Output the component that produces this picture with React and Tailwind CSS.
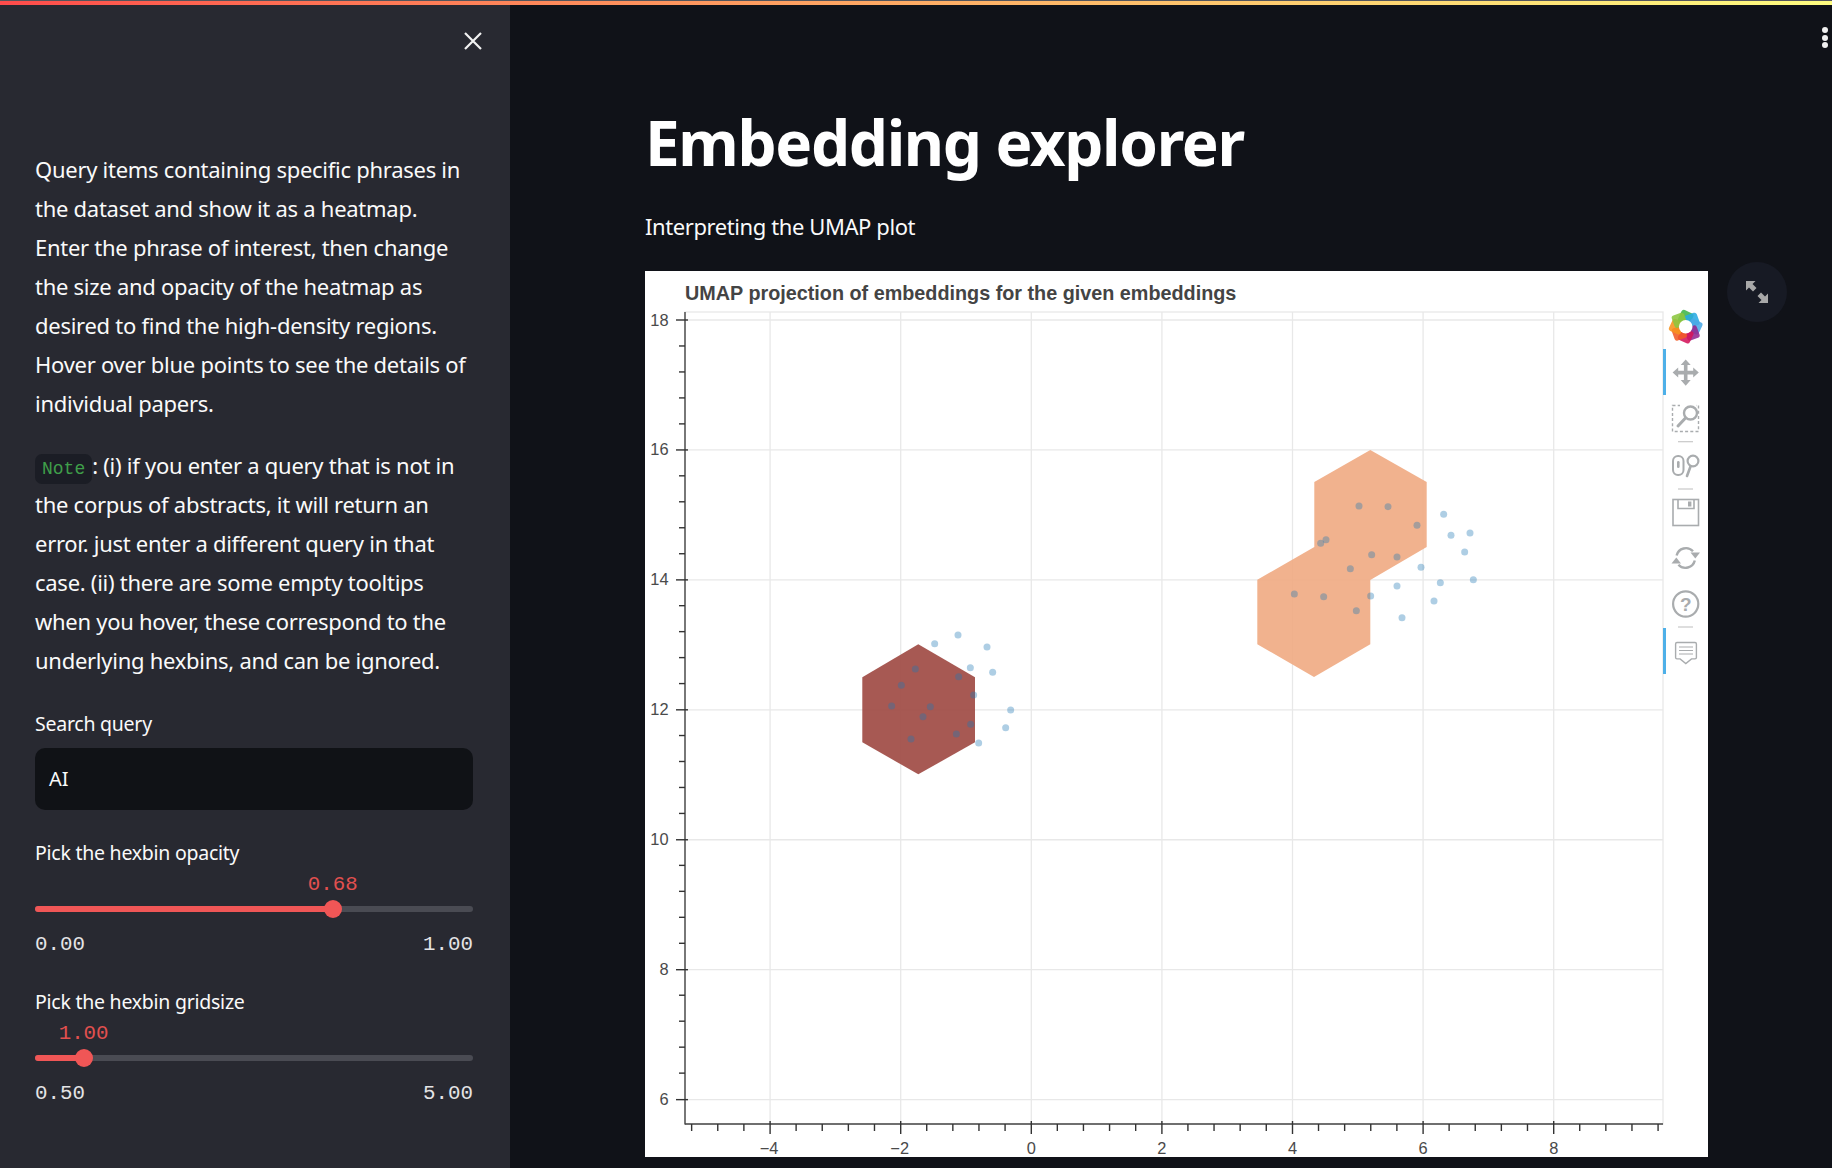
import React from "react";

const W = 1063, H = 886, OX = 645, OY = 271;
const xPos = (v) => 1031.3 + v * 65.3;
const yPos = (v) => 320 + (18 - v) * 64.97;

const darkPts = [[344,131],[414,105],[501,141],[451,203],[518,217],[286,207],[416,230],[244,256],[461,285],[215,318],[331,320],[572,330],[309,350],[452,373],[557,383],[409,402],[273,417],[476,429]].map(([x,y]) => [820 + x/3, 600 + y/3]);
const orangePts = [[387,228],[474,230],[561,286],[641,253],[720,309],[663,316],[288,329],[272,340],[704,366],[425,374],[501,381],[361,416],[573,412],[631,458],[730,449],[501,468],[193,492],[281,500],[422,498],[612,513],[379,542],[516,563]].map(([x,y]) => [1230 + x/3, 430 + y/3]);

const majorX = [-4,-2,0,2,4,6,8];
const majorY = [18,16,14,12,10,8,6];
const minorX = Array.from({length: 38}, (_, i) => 770 + (i-3) * 26.12).filter((_, i) => (i-3) % 5 !== 0);
const minorY = Array.from({length: 31}, (_, i) => 320 + i * 25.97).filter((_, i) => i % 5 !== 0);

const petals = ["#3fb54a","#29abe2","#4aa8e6","#93278f","#d4145a","#f15a24","#f7931e","#8cc63f"];

function BokehPlot() {
  const gray = "#a9acae";
  const axis = "#444444";
  const tick = { fontFamily: "'Liberation Sans', sans-serif", fontSize: 16.4, fill: "#4a4a4a" };
  return (
    <svg width={W} height={H} viewBox={`${OX} ${OY} ${W} ${H}`} className="block bg-white">
      <rect x="685" y="312" width="978" height="812" fill="none" stroke="#e8e8e8" strokeWidth="1.3" />
      {majorX.map((v) => <line key={v} x1={xPos(v)} x2={xPos(v)} y1="312" y2="1124" stroke="#e8e8e8" strokeWidth="1.3" />)}
      {majorY.map((v) => <line key={v} x1="685" x2="1663" y1={yPos(v)} y2={yPos(v)} stroke="#e8e8e8" strokeWidth="1.3" />)}

      <g fill="#a04b44" fillOpacity="0.92">
        <polygon points="918.3,644.3 975,677.3 975,742.3 918.3,774.3 862.3,742.3 862.3,677.3" />
      </g>
      <g fill="#efaa82" fillOpacity="0.9">
        <polygon points="1370.3,450 1426.7,482 1426.7,547 1370.3,580 1370.3,644.3 1314,677 1257.3,644.3 1257.3,579.7 1314.3,547 1314.3,482" />
      </g>
      <g fill="#1f77b4" fillOpacity="0.36">
        {[...darkPts, ...orangePts].map(([x, y], i) => <circle key={i} cx={x} cy={y} r="3.5" />)}
      </g>

      <text x="685" y="300" fontFamily="'Liberation Sans', sans-serif" fontWeight="700" fontSize="19.8" fill="#444444">UMAP projection of embeddings for the given embeddings</text>

      <line x1="685" x2="685" y1="312" y2="1124.6" stroke={axis} strokeWidth="1.4" />
      <line x1="685" x2="1663" y1="1124" y2="1124" stroke={axis} strokeWidth="1.4" />
      {majorY.map((v) => <line key={v} x1="676" x2="688" y1={yPos(v)} y2={yPos(v)} stroke="#333" strokeWidth="1.4" />)}
      {minorY.map((y) => <line key={y} x1="679" x2="685" y1={y} y2={y} stroke="#333" strokeWidth="1.4" />)}
      {majorX.map((v) => <line key={v} x1={xPos(v)} x2={xPos(v)} y1="1121" y2="1134" stroke="#333" strokeWidth="1.4" />)}
      {minorX.map((x) => <line key={x} x1={x} x2={x} y1="1124" y2="1131" stroke="#333" strokeWidth="1.4" />)}
      {majorY.map((v) => <text key={v} x="668.5" y={yPos(v) + 5.5} textAnchor="end" {...tick}>{v}</text>)}
      {majorX.map((v) => <text key={v} x={xPos(v) + (v < 0 ? -1 : 0)} y="1154" textAnchor="middle" {...tick}>{v < 0 ? `−${-v}` : v}</text>)}

      <rect x="1663" y="349" width="3" height="46" fill="#4eb0e8" />
      <rect x="1663" y="628" width="3" height="46" fill="#4eb0e8" />

      {/* Bokeh logo */}
      <g transform="translate(1685.7 326.7)">
        {petals.map((c, i) => (
          <rect key={i} x="-6.5" y="-15.5" width="13" height="13" rx="2.5" fill={c} fillOpacity="0.88" transform={`rotate(${i * 45} 0 0) rotate(25 0 -9)`} />
        ))}
        <circle r="6.8" fill="#fff" />
      </g>

      {/* Pan */}
      <path fill={gray} d="M1685.7 359.5l5 5.6h-3.2v5.7h5.7v-3.2l5.6 5-5.6 5v-3.2h-5.7v5.7h3.2l-5 5.6-5-5.6h3.2v-5.7h-5.7v3.2l-5.6-5 5.6-5v3.2h5.7v-5.7h-3.2z" />

      {/* Box zoom */}
      <rect x="1672.5" y="405.5" width="26" height="26" fill="none" stroke={gray} strokeWidth="1.4" strokeDasharray="3 2.2" />
      <rect x="1680" y="403" width="16" height="20" fill="#fff" />
      <circle cx="1690.5" cy="413" r="6.5" fill="#fff" stroke={gray} strokeWidth="2.4" />
      <line x1="1685.5" y1="418" x2="1678" y2="426" stroke={gray} strokeWidth="3" strokeLinecap="round" />

      <line x1="1678" x2="1693" y1="441.7" y2="441.7" stroke="#c8c8c8" strokeWidth="1.2" />

      {/* Wheel zoom */}
      <rect x="1673" y="456" width="10.5" height="19" rx="5" fill="none" stroke={gray} strokeWidth="2" />
      <rect x="1677" y="461" width="2.6" height="7" rx="1.3" fill={gray} />
      <circle cx="1693" cy="461" r="5.4" fill="none" stroke={gray} strokeWidth="2.2" />
      <line x1="1690.5" y1="466.5" x2="1687" y2="476" stroke={gray} strokeWidth="2.6" strokeLinecap="round" />

      <line x1="1678" x2="1693" y1="489" y2="489" stroke="#c8c8c8" strokeWidth="1.2" />

      {/* Save */}
      <rect x="1673" y="499.5" width="25.5" height="26" fill="none" stroke={gray} strokeWidth="1.6" />
      <path d="M1678 500v8.5h16V500" fill="none" stroke={gray} strokeWidth="1.6" />
      <rect x="1688" y="501.5" width="3.4" height="5" fill={gray} />

      {/* Reset */}
      <path d="M1676.6 555.5a9.6 9.6 0 0 1 16.4-4.2" fill="none" stroke={gray} strokeWidth="2.4" />
      <path d="M1694.8 560.5a9.6 9.6 0 0 1-16.4 4.2" fill="none" stroke={gray} strokeWidth="2.4" />
      <path d="M1690.5 552.5h9.5l-4.7 6z" fill={gray} />
      <path d="M1671.5 563.5h9.5l-4.7-6z" fill={gray} />

      {/* Help */}
      <circle cx="1685.7" cy="604" r="12.6" fill="none" stroke={gray} strokeWidth="2.2" />
      <text x="1685.7" y="611" textAnchor="middle" fontFamily="'Liberation Sans', sans-serif" fontWeight="700" fontSize="19" fill={gray}>?</text>

      <line x1="1678" x2="1693" y1="627" y2="627" stroke="#c8c8c8" strokeWidth="1.2" />

      {/* Hover */}
      <path d="M1677 642.5h18a1.4 1.4 0 0 1 1.4 1.4v13.6a1.4 1.4 0 0 1-1.4 1.4h-3.5l-5.7 4.6-5.7-4.6h-3.1a1.4 1.4 0 0 1-1.4-1.4v-13.6a1.4 1.4 0 0 1 1.4-1.4z" fill="none" stroke={gray} strokeWidth="1.4" />
      <path d="M1679 647h14M1679 650.5h14M1679 654h14" stroke={gray} strokeWidth="1.2" />
    </svg>
  );
}

function Slider({ label, min, max, value, pct }) {
  return (
    <div>
      <div className="h-[28px] text-[19.5px] leading-[28px] tracking-[-0.25px]">{label}</div>
      <div className="relative mt-[39px] h-[6px] rounded-full bg-[#4a4b53]">
        <div className="h-full rounded-full bg-[#f05656]" style={{ width: `${pct}%` }} />
        <div className="absolute top-1/2 h-[18px] w-[18px] -translate-x-1/2 -translate-y-1/2 rounded-full bg-[#f05656]" style={{ left: `${pct}%` }} />
        <div className="absolute bottom-[14px] -translate-x-1/2 font-['Liberation_Mono',monospace] text-[20.8px] leading-[26px] text-[#e2504f]" style={{ left: `${pct}%` }}>{value}</div>
      </div>
      <div className="mt-[20px] flex h-[26px] justify-between font-['Liberation_Mono',monospace] text-[20.8px] leading-[26px] text-[#e4e4e6]">
        <span>{min}</span>
        <span>{max}</span>
      </div>
    </div>
  );
}

export default function App() {
  return (
    <div className="flex h-[1168px] w-full flex-col overflow-hidden bg-[#101218] font-['Noto_Sans',sans-serif] text-[#fafafa]">
      <div className="h-[5px] shrink-0 border-t border-[#55565c] bg-gradient-to-r from-[#ff4b4b] to-[#fffd80]" />
      <div className="flex min-h-0 flex-1">
        <aside className="w-[510px] shrink-0 bg-[#282931] pl-[35px] pr-[37px]">
          <div className="flex h-[145px] items-start justify-end pt-[27px]">
            <svg width="18" height="18" viewBox="0 0 18 18" fill="none" stroke="#f2f2f2" strokeWidth="2.2" className="-mr-[9px]">
              <path d="M1 1l16 16M17 1L1 17" />
            </svg>
          </div>
          <p className="whitespace-nowrap text-[22px] leading-[39px] tracking-[-0.27px]">
            Query items containing specific phrases in<br />
            the dataset and show it as a heatmap.<br />
            Enter the phrase of interest, then change<br />
            the size and opacity of the heatmap as<br />
            desired to find the high-density regions.<br />
            Hover over blue points to see the details of<br />
            individual papers.
          </p>
          <p className="mt-[23px] whitespace-nowrap text-[22px] leading-[39px] tracking-[-0.27px]">
            <code className="rounded-[7px] bg-[#1b1d25] px-[7px] py-[5px] font-['Liberation_Mono',monospace] text-[18px] leading-none tracking-normal text-[#3f9f4a]">Note</code>: (i) if you enter a query that is not in<br />
            the corpus of abstracts, it will return an<br />
            error. just enter a different query in that<br />
            case. (ii) there are some empty tooltips<br />
            when you hover, these correspond to the<br />
            underlying hexbins, and can be ignored.
          </p>
          <div className="mt-[29.5px] h-[28px] text-[19.5px] leading-[28px] tracking-[-0.25px]">Search query</div>
          <div className="mt-[10px] flex h-[62px] items-center rounded-[10px] bg-[#101216] px-[14px] text-[20px]">AI</div>
          <div className="mt-[29px]">
            <Slider label="Pick the hexbin opacity" min="0.00" max="1.00" value="0.68" pct={68} />
          </div>
          <div className="mt-[30px]">
            <Slider label="Pick the hexbin gridsize" min="0.50" max="5.00" value="1.00" pct={11.1} />
          </div>
        </aside>
        <main className="relative min-w-0 flex-1 pl-[135px] pt-[97px]">
          <div className="absolute right-[4px] top-[22px] flex flex-col gap-[1.5px]">
            <span className="h-[6px] w-[6px] rounded-full bg-[#f0f0f0]" />
            <span className="h-[6px] w-[6px] rounded-full bg-[#f0f0f0]" />
            <span className="h-[6px] w-[6px] rounded-full bg-[#f0f0f0]" />
          </div>
          <h1 className="h-[80px] whitespace-nowrap text-[62px] font-bold leading-[80px] tracking-[-1.35px] text-white">Embedding explorer</h1>
          <p className="mt-[25px] h-[39px] text-[22px] leading-[39px] tracking-[-0.41px]">Interpreting the UMAP plot</p>
          <div className="relative mt-[25px] w-[1063px]">
            <BokehPlot />
            <div className="absolute left-[1082px] top-[-9px] flex h-[60px] w-[60px] items-center justify-center rounded-full bg-[#171a24]">
              <svg width="24" height="24" viewBox="0 0 24 24" fill="#a8a8a8">
                <path d="M1 1h9.5L7.5 4l4 4-3.5 3.5-4-4L1 10.5z" />
                <path d="M23 23h-9.5l3-3-4-4 3.5-3.5 4 4 3-3z" />
              </svg>
            </div>
          </div>
        </main>
      </div>
    </div>
  );
}
